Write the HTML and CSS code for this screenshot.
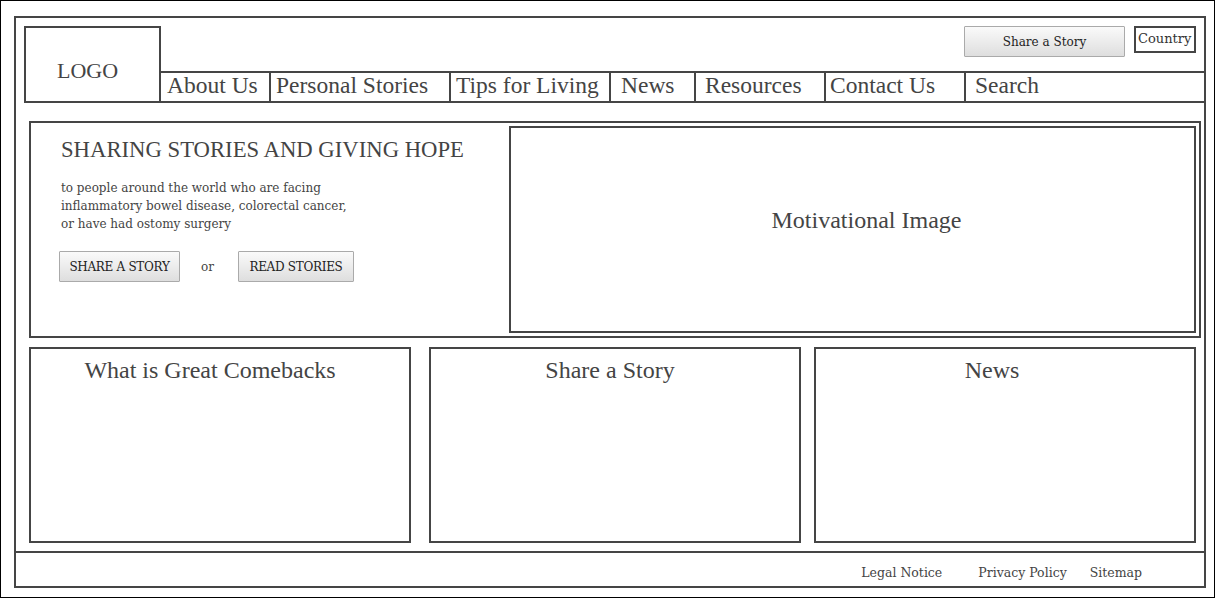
FILE: index.html
```html
<!DOCTYPE html>
<html lang="en">
<head>
    <meta charset="UTF-8">
    <meta name="viewport" content="width=device-width, initial-scale=1.0">
    <title>Great Comebacks - Home</title>
    <link rel="stylesheet" href="styles.css">
</head>
<body>

<div class="page">
    <div class="frame">
        <div class="header">
            <div class="logo">LOGO</div>
            <div class="header-right">
                <div class="tools">
                    <button class="btn btn-top">Share a Story</button>
                    <div class="country">Country</div>
                </div>
                <ul class="nav">
                    <li class="nav-about">About Us</li>
                    <li class="nav-stories">Personal Stories</li>
                    <li class="nav-tips">Tips for Living</li>
                    <li class="nav-news">News</li>
                    <li class="nav-resources">Resources</li>
                    <li class="nav-contact">Contact Us</li>
                    <li class="nav-search">Search</li>
                </ul>
            </div>
        </div>

        <div class="hero">
            <div class="hero-text">
                <h1>SHARING STORIES AND GIVING HOPE</h1>
                <p>to people around the world who are facing<br>
                inflammatory bowel disease, colorectal cancer,<br>
                or have had ostomy surgery</p>
                <div class="hero-actions">
                    <button class="btn btn-share">SHARE A STORY</button>
                    <span class="or">or</span>
                    <button class="btn btn-read">READ STORIES</button>
                </div>
            </div>
            <div class="hero-image">Motivational Image</div>
        </div>

        <div class="cards">
            <div class="card card-about"><h2>What is Great Comebacks</h2></div>
            <div class="card card-share"><h2>Share a Story</h2></div>
            <div class="card card-news"><h2>News</h2></div>
        </div>

        <div class="footer">
            <a href="#" class="legal">Legal Notice</a>
            <a href="#" class="privacy">Privacy Policy</a>
            <a href="#" class="sitemap">Sitemap</a>
        </div>
    </div>
</div>

</body>
</html>
```

FILE: styles.css
```css
* {
    box-sizing: border-box;
}

body {
    margin: 0;
    background-color: #fff;
    color: #444;
    font-family: "DejaVu Serif", serif;
}

.page {
    width: 1215px;
    height: 598px;
    border: 1px solid #000;
    padding: 15px 8px 9px 13px;
}

.frame {
    height: 100%;
    border: 2px solid #454545;
    display: flex;
    flex-direction: column;
}

/* header */

.header {
    display: flex;
    padding: 8px 0 0 8px;
}

.logo {
    width: 137px;
    height: 77px;
    border: 2px solid #454545;
    padding: 30px 0 0 31px;
    font-family: "Liberation Serif", serif;
    font-size: 22px;
    line-height: 26px;
}

.header-right {
    flex: 1;
    display: flex;
    flex-direction: column;
}

.tools {
    height: 45px;
    display: flex;
    justify-content: flex-end;
    align-items: flex-start;
    padding-right: 8px;
}

.btn {
    font-family: "DejaVu Serif", serif;
    font-size: 12px;
    color: #222;
    border: 1px solid #aaa;
    border-radius: 1px;
    background: linear-gradient(#fafafa, #dedede);
    padding: 0 8px;
    height: 31px;
}

.btn-top {
    width: 161px;
}

.country {
    width: 62px;
    height: 27px;
    margin-left: 9px;
    border: 2px solid #454545;
    padding: 0 2px;
    font-size: 13px;
    line-height: 22px;
    color: #333;
}

.nav {
    list-style: none;
    margin: 0;
    padding: 0;
    height: 32px;
    border-top: 2px solid #454545;
    border-bottom: 2px solid #454545;
    display: flex;
    font-family: "Liberation Serif", serif;
    font-size: 23.5px;
    line-height: 25px;
}

.nav li {
    border-left: 2px solid #454545;
}

.nav .nav-about { width: 108px; padding-left: 6px; border-left: none; }
.nav .nav-stories { width: 180px; padding-left: 5px; }
.nav .nav-tips { width: 160px; padding-left: 5px; }
.nav .nav-news { width: 85px; padding-left: 10px; }
.nav .nav-resources { width: 130px; padding-left: 9px; }
.nav .nav-contact { width: 140px; padding-left: 4px; }
.nav .nav-search { flex: 1; padding-left: 9px; }

/* hero */

.hero {
    height: 217px;
    margin: 18px 3px 0 13px;
    border: 2px solid #454545;
    padding: 3px;
    display: flex;
}

.hero-text {
    flex: 1;
    padding: 10px 0 0 27px;
}

.hero-text h1 {
    margin: 0;
    font-family: "Liberation Serif", serif;
    font-weight: normal;
    font-size: 22.7px;
    line-height: 28px;
}

.hero-text p {
    margin: 15px 0 0 0;
    font-size: 12px;
    line-height: 18px;
}

.hero-actions {
    margin-top: 18px;
    display: flex;
    align-items: center;
    margin-left: -2px;
}

.btn-share {
    width: 121px;
    letter-spacing: -0.3px;
}

.btn-read {
    width: 116px;
    letter-spacing: -0.3px;
}

.or {
    font-size: 12px;
    margin: 0 24px 0 21px;
}

.hero-image {
    width: 687px;
    border: 2px solid #454545;
    display: flex;
    align-items: center;
    justify-content: center;
    padding: 0 0 18px 28px;
    font-family: "Liberation Serif", serif;
    font-size: 24px;
}

/* cards */

.cards {
    display: flex;
    margin: 9px 3px 0 13px;
}

.card {
    height: 196px;
    border: 2px solid #454545;
}

.card h2 {
    margin: 0;
    padding: 7px 20px 0 0;
    text-align: center;
    font-family: "Liberation Serif", serif;
    font-weight: normal;
    font-size: 24px;
    line-height: 28px;
}

.card-about { width: 382px; }
.card-share { width: 372px; margin-left: 18px; }
.card-news { width: 382px; margin-left: 13px; }

.card-share h2 { padding-right: 10px; }
.card-news h2 { padding-right: 26px; }

/* footer */

.footer {
    flex: 1;
    margin-top: 8px;
    border-top: 2px solid #454545;
    display: flex;
    justify-content: flex-end;
    align-items: flex-start;
    padding: 12px 62px 0 0;
    font-size: 12.5px;
    line-height: 16px;
}

.footer a {
    color: #444;
    text-decoration: none;
}

.footer .privacy { margin-left: 36px; }
.footer .sitemap { margin-left: 23px; }
```
